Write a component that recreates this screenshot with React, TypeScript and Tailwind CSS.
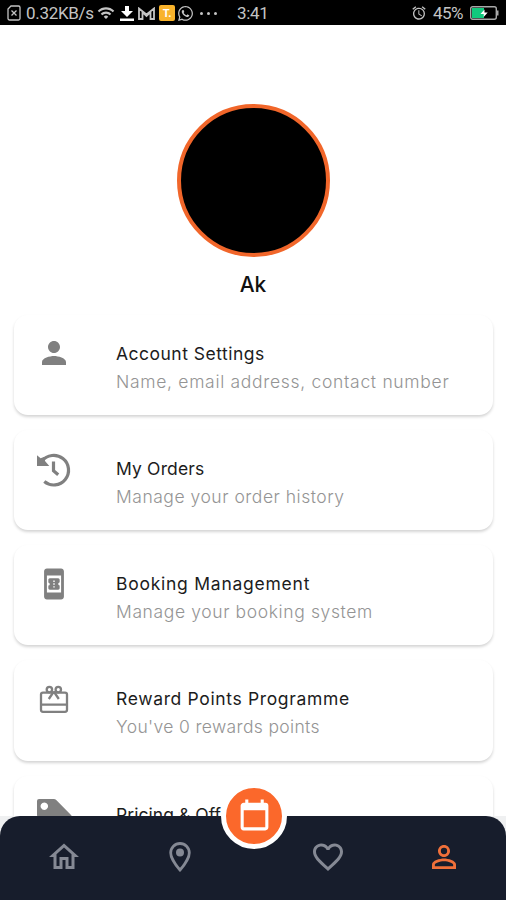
import type { ReactNode } from "react";
import {
  MdAlarm,
  MdBookOnline,
  MdFavoriteBorder,
  MdOutlineHome,
  MdPerson,
  MdPersonOutline,
  MdWifi,
} from "react-icons/md";
import { FaWhatsapp } from "react-icons/fa";

function HistoryIcon() {
  return (
    <svg viewBox="0 0 36 36" className="size-9" fill="none" stroke="currentColor">
      <path d="M6 9.200A14.800 14.800 0 1 1 8.300 29.600" strokeWidth="3.200" />
      <path d="M1 3.200 L4.600 6.200 L8.500 4.800 L9 9 L13.300 13.900 H1Z" fill="currentColor" stroke="none" />
      <path d="M17.500 9.500v9.300l4.700 4" strokeWidth="3.200" />
    </svg>
  );
}

function GiftIcon() {
  return (
    <svg viewBox="0 0 36 36" className="size-9" fill="none" stroke="currentColor" strokeWidth="2.300">
      <rect x="5" y="10.600" width="26" height="19.200" rx="2" />
      <path d="M5 22.600h26M17.800 9.500l-5 7.500M17.800 9.500l5 7.500" />
      <circle cx="13.400" cy="7.600" r="2.700" />
      <circle cx="22.300" cy="7.600" r="2.700" />
    </svg>
  );
}

function TagIcon() {
  return (
    <svg viewBox="0 0 36 36" className="size-9" fill="currentColor" fillRule="evenodd">
      <path d="M1 3a2 2 0 0 1 2-2h14.500a4 4 0 0 1 3 1.200L35 17a3 3 0 0 1 0 4L22 34a3 3 0 0 1-4 0L2 19a3 3 0 0 1-1-2ZM8.300 4.500a3.700 3.700 0 1 0 .01 0Z" />
    </svg>
  );
}

function PinIcon() {
  return (
    <svg viewBox="0 0 36 36" className="size-9" fill="none" stroke="currentColor">
      <path d="M18 4.500a9.300 9.300 0 0 0-9.300 9.300C8.700 20.500 18 31 18 31s9.300-10.500 9.300-17.200A9.300 9.300 0 0 0 18 4.500Z" strokeWidth="2.800" />
      <circle cx="18" cy="13.500" r="4" fill="currentColor" stroke="none" />
    </svg>
  );
}

function CalendarIcon() {
  return (
    <svg viewBox="0 0 24 24" className="mt-px size-[37px]" fill="currentColor">
      <path d="M19 19H5V8h14m-3-7v2H8V1H6v2H5c-1.110 0-2 .89-2 2v14a2 2 0 0 0 2 2h14c1.110 0 2-.89 2-2V5a2 2 0 0 0-2-2h-1V1" />
    </svg>
  );
}

function StatusBar() {
  return (
    <header className="flex h-[25px] shrink-0 items-center bg-black pt-px font-[Roboto,sans-serif] text-[17px] leading-none text-[#c4c4c4]">
      <svg viewBox="0 0 14 16" className="ml-[7px] h-4 w-3.5" fill="none" stroke="currentColor" strokeWidth="1.3">
        <path d="M4 1h7.500a1.500 1.500 0 0 1 1.500 1.500v11a1.500 1.500 0 0 1-1.500 1.500h-9A1.500 1.500 0 0 1 1 13.500V4Z" />
        <path d="M4.500 5.500l5 5M9.500 5.500l-5 5" />
      </svg>
      <span className="ml-[5px] w-[69px] tracking-[-0.3px] whitespace-nowrap">0.32KB/s</span>
      <MdWifi className="ml-[2px] size-[18px]" />
      <svg viewBox="0 0 14 16" className="ml-[5px] h-4 w-3.5 text-white" fill="currentColor">
        <path d="M5 1h4v5h4l-6 6-6-6h4ZM0 13.500h14V16H0Z" />
      </svg>
      <svg viewBox="0 0 17 13" className="ml-1 h-[13px] w-[17px]" fill="none" stroke="currentColor" strokeWidth="1.8">
        <path d="M1 12V1.500l7.500 6 7.500-6V12h-3.500V5L8.500 9 4.500 5v7Z" />
      </svg>
      <span className="ml-1 flex h-4 w-4 items-center justify-center rounded-[2px] bg-[#f9b32b] text-[11px] font-bold text-white">
        T.
      </span>
      <FaWhatsapp className="ml-[2px] size-[17px]" />
      <span className="ml-1.5 flex gap-1">
        <i className="size-[3px] rounded-full bg-current" />
        <i className="size-[3px] rounded-full bg-current" />
        <i className="size-[3px] rounded-full bg-current" />
      </span>
      <span className="ml-5 tracking-[-0.3px]">3:41</span>
      <MdAlarm className="ml-auto size-4" />
      <span className="ml-[6px] w-[31px] tracking-[-0.6px]">45%</span>
      <svg viewBox="0 0 29 14" className="mr-[7px] ml-[6px] h-3.5 w-[29px]">
        <rect x=".7" y=".7" width="25.600" height="12.600" rx="2" fill="none" stroke="#a9a9a9" strokeWidth="1.400" />
        <path d="M2 2h12v10H2Z" fill="#10c97d" />
        <path d="M14.500 3.500l-4 4.500h3.200v3l4-4.500h-3.200Z" fill="#fff" />
        <path d="M27 4.500h1.500v5H27Z" fill="#a9a9a9" />
      </svg>
    </header>
  );
}

interface MenuItem {
  title: string;
  titleClass: string;
  detail: string;
  detailClass: string;
  icon: ReactNode;
}

const items: MenuItem[] = [
  {
    title: "Account Settings",
    titleClass: "tracking-[0.49px]",
    detail: "Name, email address, contact number",
    detailClass: "tracking-[0.69px]",
    icon: <MdPerson className="mb-[3px] size-9" />,
  },
  {
    title: "My Orders",
    titleClass: "tracking-[0.15px]",
    detail: "Manage your order history",
    detailClass: "tracking-[0.52px]",
    icon: <HistoryIcon />,
  },
  {
    title: "Booking Management",
    titleClass: "tracking-[0.75px]",
    detail: "Manage your booking system",
    detailClass: "tracking-[0.62px]",
    icon: <MdBookOnline className="mb-[3px] size-[34px]" />,
  },
  {
    title: "Reward Points Programme",
    titleClass: "tracking-[0.65px]",
    detail: "You've 0 rewards points",
    detailClass: "tracking-[0.35px]",
    icon: <GiftIcon />,
  },
  {
    title: "Pricing & Off",
    titleClass: "tracking-[0.05px]",
    detail: "",
    detailClass: "",
    icon: <TagIcon />,
  },
];

function MenuCard({ item }: { item: MenuItem }) {
  return (
    <li className="flex h-[100.300px] shrink-0 rounded-[14px] bg-white pt-[22px] shadow-[0_2px_3px_rgba(0,0,0,0.17)]">
      <span className="ml-[22px] flex size-9 items-center justify-center text-[#808080]">{item.icon}</span>
      <div className="ml-[44px] pt-[3px] whitespace-nowrap">
        <h2 className={`text-[17.500px] leading-7 text-[#1c1c1c] ${item.titleClass}`}>{item.title}</h2>
        {item.detail && (
          <p className={`text-[17.500px] leading-7 font-light text-[#949494] ${item.detailClass}`}>{item.detail}</p>
        )}
      </div>
    </li>
  );
}

export default function App() {
  return (
    <div className="flex h-[900px] w-[506px] flex-col overflow-hidden bg-white font-[Inter,sans-serif]">
      <StatusBar />
      <main className="flex min-h-0 flex-1 flex-col overflow-hidden">
        <div className="mt-[79px] size-[153px] shrink-0 self-center rounded-full border-4 border-[#f1662a] bg-black" />
        <h1 className="mt-3 shrink-0 text-center text-[21px] leading-8 font-medium text-[#111]">Ak</h1>
        <ul className="mt-[13.500px] flex flex-col gap-[15px] pr-[13px] pl-3.5">
          {items.map((item) => (
            <MenuCard key={item.title} item={item} />
          ))}
        </ul>
      </main>
      <div className="h-[84px] shrink-0 bg-[#eff0f1]">
        <nav className="relative flex h-full items-start rounded-t-[20px] bg-[#171d2c] pt-[23px] text-[#858994]">
          <MdOutlineHome className="ml-[46px] size-9" />
          <span className="ml-[80px]">
            <PinIcon />
          </span>
          <MdFavoriteBorder className="ml-[111.500px] size-9" />
          <MdPersonOutline className="ml-[80px] size-9 text-[#f0703a]" />
          <button className="absolute -top-[33px] left-[221px] flex size-[66px] items-center justify-center rounded-full border-5 border-white bg-[#fb682b] text-white">
            <CalendarIcon />
          </button>
        </nav>
      </div>
    </div>
  );
}
